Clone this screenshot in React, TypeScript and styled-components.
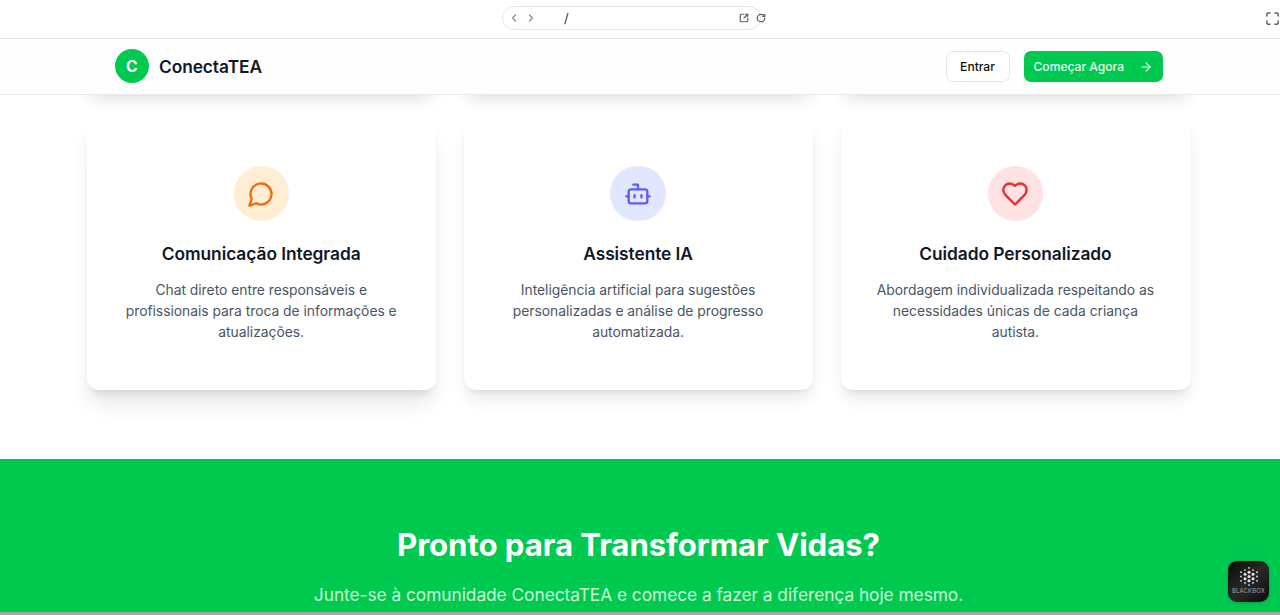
import React from 'react';
import styled, { createGlobalStyle } from 'styled-components';
import { ArrowRight, Bot, ChevronLeft, ChevronRight, Maximize, RotateCw, SquareArrowOutUpRight } from 'lucide-react';

const GlobalStyle = createGlobalStyle`
  * { box-sizing: border-box; }
  body { margin: 0; background: #fff; font-family: Inter, 'Liberation Sans', sans-serif; overflow: hidden; }
  h1, h2, h3, p { margin: 0; }
  button { font-family: inherit; cursor: pointer; }
`;

const Window = styled.div`
  display: flex;
  flex-direction: column;
  height: 615px;
  overflow: hidden;
`;

const BrowserBar = styled.div`
  display: grid;
  grid-template-columns: 502px 265px 1fr;
  align-items: center;
  flex: none;
  height: 39px;
  padding-bottom: 3px;
  border-bottom: 1px solid #e4e4e4;
  color: #5f5f64;
`;

const AddressGroup = styled.div`
  grid-column: 2;
  display: flex;
  align-items: center;
`;

const AddressPill = styled.div`
  display: flex;
  align-items: center;
  flex: none;
  width: 259px;
  height: 24px;
  padding: 0 11px 0 5px;
  border: 1px solid #e5e5e5;
  border-radius: 12px;
`;

const NavIcons = styled.div`
  display: flex;
  gap: 5px;
  color: #88888c;
`;

const Path = styled.span`
  flex: 1;
  margin-left: 27px;
  font-size: 13px;
  color: #333;
`;

const Reload = styled.div`
  display: flex;
  margin-left: -5px;
`;

const Expand = styled.div`
  display: flex;
  justify-content: flex-end;
  padding-top: 1px;
`;

const Header = styled.header`
  position: relative;
  z-index: 1;
  display: flex;
  align-items: center;
  justify-content: space-between;
  flex: none;
  height: 56px;
  padding: 0 117px 0 114.5px;
  background: #fefefe;
  border-bottom: 1px solid #e9eaec;
`;

const Brand = styled.div`
  display: flex;
  align-items: center;
  gap: 9.8px;
  font-size: 17.34px;
  letter-spacing: -.07px;
  font-weight: 600;
  color: #101828;
`;

const BrandMark = styled.span`
  display: flex;
  align-items: center;
  justify-content: center;
  width: 34.67px;
  height: 34.67px;
  margin-bottom: 1px;
  padding-top: 1px;
  border-radius: 50%;
  background: #00c950;
  color: #fff;
  font-size: 15.6px;
  font-weight: 700;
`;

const Actions = styled.div`
  display: flex;
  gap: 14px;
`;

const Button = styled.button<{ $primary?: boolean }>`
  display: flex;
  align-items: center;
  justify-content: ${p => (p.$primary ? 'space-between' : 'center')};
  width: ${p => (p.$primary ? 139.5 : 64)}px;
  height: 31px;
  padding: 0 ${p => (p.$primary ? '10px' : '0')};
  border: ${p => (p.$primary ? 'none' : '1px solid #e5e5e7')};
  border-radius: 7px;
  background: ${p => (p.$primary ? '#00c950' : '#fff')};
  color: ${p => (p.$primary ? '#e9fff0' : '#111')};
  font-size: 12.14px;
  letter-spacing: -.03px;
  font-weight: 500;
`;

const Features = styled.section`
  flex: none;
  height: 409px;
  margin-top: -45px;
  padding: 0 89.5px 0 87px;
`;

const CardGrid = styled.div`
  display: grid;
  grid-template-columns: repeat(3, 1fr);
  grid-template-rows: 40px 272px;
  gap: 28px;
`;

const Card = styled.article<{ $raised?: boolean }>`
  display: flex;
  flex-direction: column;
  align-items: center;
  padding: 48px 36.5px 0 36px;
  border-radius: 12px;
  background: #fff;
  box-shadow: ${p =>
    p.$raised
      ? '0 17px 22px -4px rgba(0,0,0,.1), 0 7px 9px -5px rgba(0,0,0,.12)'
      : '0 11px 17px -3px rgba(0,0,0,.1), 0 4px 6px -4px rgba(0,0,0,.12)'};
  text-align: center;
`;

const CardEdge = styled.div`
  border-radius: 12px;
  background: #fff;
  box-shadow: 0 11px 17px -3px rgba(0,0,0,.14), 0 4px 6px -4px rgba(0,0,0,.1);
`;

const IconCircle = styled.div<{ $bg: string; $fg: string }>`
  display: flex;
  align-items: center;
  justify-content: center;
  flex: none;
  width: 55.4px;
  height: 55.4px;
  border-radius: 50%;
  background: ${p => p.$bg};
  color: ${p => p.$fg};
`;

const CardTitle = styled.h3`
  margin-top: 20.6px;
  font-size: 17.34px;
  letter-spacing: -.05px;
  line-height: 24px;
  font-weight: 600;
  color: #101828;
  white-space: nowrap;
`;

const CardText = styled.p`
  margin-top: 14px;
  font-size: 13.87px;
  letter-spacing: -.025px;
  line-height: 20.8px;
  color: #4a5565;
  white-space: nowrap;
`;

const CallToAction = styled.section`
  flex: none;
  height: 153px;
  padding: 66px 3px 0 0;
  background: #00c950;
  text-align: center;
`;

const CtaTitle = styled.h2`
  font-size: 31.2px;
  letter-spacing: -.08px;
  line-height: 40px;
  font-weight: 700;
  color: #fff;
`;

const CtaText = styled.p`
  margin-top: 17px;
  font-size: 17.34px;
  letter-spacing: -.05px;
  line-height: 26px;
  color: #c8f8d8;
`;

const BottomEdge = styled.div`
  flex: none;
  height: 3px;
  background: #9fa9a3;
`;

const Badge = styled.div`
  position: absolute;
  left: 1228px;
  top: 561px;
  z-index: 2;
  display: flex;
  flex-direction: column;
  align-items: center;
  width: 41px;
  height: 41px;
  padding-top: 5px;
  border-radius: 9px;
  background: linear-gradient(135deg, #090909, #292929 50%, #0c0c0c);
  box-shadow: 0 1px 4px rgba(0,0,0,.2);
  color: #a4a4a4;
  font-size: 5.8px;
  line-height: 7px;
  letter-spacing: .25px;
`;

const LineIcon = styled.svg.attrs({ viewBox: '0 0 24 24' })`
  width: 28px;
  height: 28px;
  fill: none;
  stroke: currentColor;
  stroke-width: 2;
  stroke-linecap: round;
  stroke-linejoin: round;
`;

function ChatIcon() {
  return <LineIcon><path d="M7.9 20A9 9 0 1 0 4 16.1L2 22Z" /></LineIcon>;
}

function RobotIcon() {
  return <Bot size={28} />;
}

function HeartIcon() {
  return (
    <LineIcon>
      <path d="M19 14c1.49-1.46 3-3.21 3-5.5A5.5 5.5 0 0 0 16.5 3c-1.76 0-3 .5-4.5 2-1.5-1.5-2.74-2-4.5-2A5.5 5.5 0 0 0 2 8.5c0 2.3 1.5 4.05 3 5.5l7 7Z" />
    </LineIcon>
  );
}

const features = [
  { title: 'Comunicação Integrada', lines: ['Chat direto entre responsáveis e', 'profissionais para troca de informações e', 'atualizações.'], Icon: ChatIcon, bg: '#ffedd4', fg: '#f5690a', raised: true },
  { title: 'Assistente IA', lines: ['Inteligência artificial para sugestões', 'personalizadas e análise de progresso', 'automatizada.'], Icon: RobotIcon, bg: '#e0e7ff', fg: '#615fef' },
  { title: 'Cuidado Personalizado', lines: ['Abordagem individualizada respeitando as', 'necessidades únicas de cada criança', 'autista.'], Icon: HeartIcon, bg: '#ffe2e2', fg: '#ee2c36' },
];

const dotColumns = [
  { x: 2, n: 3 }, { x: 6, n: 4 }, { x: 10, n: 5 }, { x: 14, n: 4 }, { x: 18, n: 3 },
];

function DotMark() {
  return (
    <svg width="20" height="21" viewBox="0 0 20 21" fill="#e4e4e4">
      {dotColumns.flatMap(({ x, n }) =>
        Array.from({ length: n }, (_, i) => {
          const y = 10.5 + (i - (n - 1) / 2) * 4.3;
          const distance = Math.hypot(x - 10, y - 10.5);
          return <circle key={`${x}-${i}`} cx={x} cy={y} r={distance < 6 ? 1.5 : 0.9} />;
        })
      )}
    </svg>
  );
}

export default function App() {
  return (
    <Window>
      <GlobalStyle />
      <BrowserBar>
        <AddressGroup>
          <AddressPill>
            <NavIcons><ChevronLeft size={12} strokeWidth={2.4} /><ChevronRight size={12} strokeWidth={2.4} /></NavIcons>
            <Path>/</Path>
            <SquareArrowOutUpRight size={10} strokeWidth={2.8} />
          </AddressPill>
          <Reload><RotateCw size={10} strokeWidth={3} /></Reload>
        </AddressGroup>
        <Expand><Maximize size={15} strokeWidth={2.4} /></Expand>
      </BrowserBar>
      <Header>
        <Brand><BrandMark>C</BrandMark>ConectaTEA</Brand>
        <Actions>
          <Button>Entrar</Button>
          <Button $primary>Começar Agora<ArrowRight size={14} strokeWidth={2} /></Button>
        </Actions>
      </Header>
      <Features>
        <CardGrid>
          <CardEdge /><CardEdge /><CardEdge />
          {features.map(({ title, lines, Icon, bg, fg, raised }) => (
            <Card key={title} $raised={raised}>
              <IconCircle $bg={bg} $fg={fg}><Icon /></IconCircle>
              <CardTitle>{title}</CardTitle>
              <CardText>
                {lines.map((line, i) => <React.Fragment key={line}>{i > 0 && <br />}{line}</React.Fragment>)}
              </CardText>
            </Card>
          ))}
        </CardGrid>
      </Features>
      <CallToAction>
        <CtaTitle>Pronto para Transformar Vidas?</CtaTitle>
        <CtaText>Junte-se à comunidade ConectaTEA e comece a fazer a diferença hoje mesmo.</CtaText>
      </CallToAction>
      <BottomEdge />
      <Badge><DotMark />BLACKBOX</Badge>
    </Window>
  );
}
